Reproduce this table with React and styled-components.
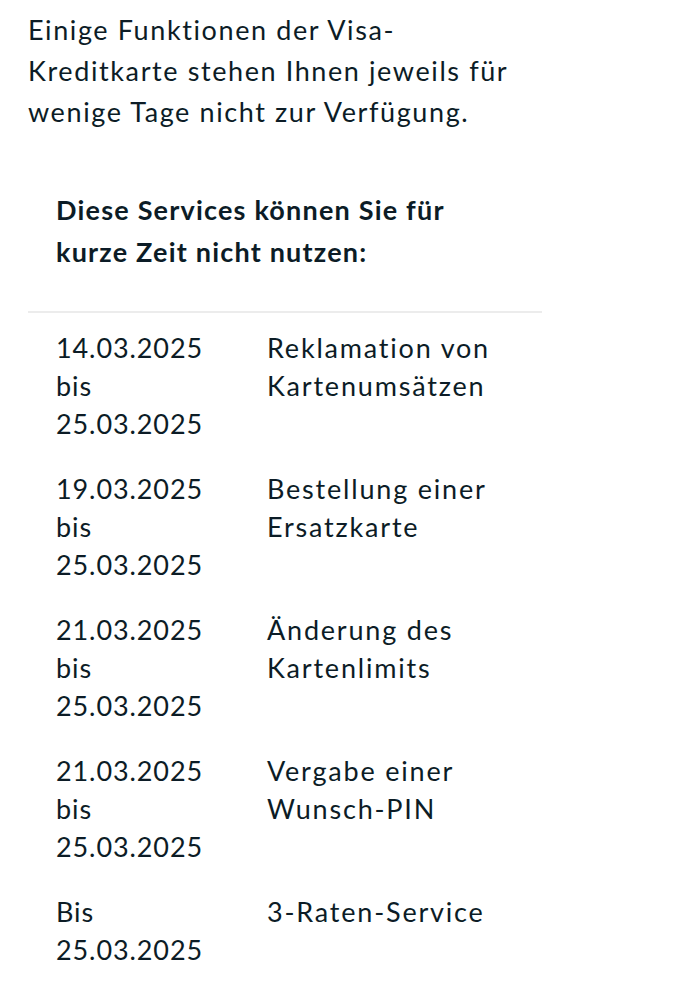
import React from "react";
import styled, { createGlobalStyle } from "styled-components";

const GlobalStyle = createGlobalStyle`
  html, body {
    margin: 0;
    padding: 0;
    background: #fff;
  }
  body {
    font-family: "Lato", "Noto Sans", sans-serif;
    color: #0c1c26;
    letter-spacing: 1.2px;
  }
`;

const Page = styled.main`
  width: 514px;
  padding: 9px 0 0 28px;
`;

const Intro = styled.p`
  margin: 0;
  font-size: 27px;
  line-height: 41px;
  letter-spacing: 1.6px;
`;

const Heading = styled.h2`
  margin: 57px 0 0;
  padding: 0 28px 38px;
  font-size: 27px;
  font-weight: 700;
  line-height: 42px;
  border-bottom: 2px solid #ececec;
`;

const ServiceTable = styled.div`
  display: grid;
  grid-template-columns: 211px 1fr;
  padding-top: 16px;
`;

const Cell = styled.div`
  padding: 0 0 27px 28px;
  font-size: 27px;
  line-height: 38px;
  letter-spacing: ${(p) => (p.$date ? "0.9px" : "1.8px")};
`;

const rows = [
  { from: "14.03.2025", to: "bis", until: "25.03.2025", service: ["Reklamation von", "Kartenumsätzen"] },
  { from: "19.03.2025", to: "bis", until: "25.03.2025", service: ["Bestellung einer", "Ersatzkarte"] },
  { from: "21.03.2025", to: "bis", until: "25.03.2025", service: ["Änderung des", "Kartenlimits"] },
  { from: "21.03.2025", to: "bis", until: "25.03.2025", service: ["Vergabe einer", "Wunsch-PIN"] },
  { from: "Bis", until: "25.03.2025", service: ["3-Raten-Service"] },
];

function App() {
  return (
    <>
      <GlobalStyle />
      <Page>
        <Intro>
          Einige Funktionen der Visa-
          <br />
          Kreditkarte stehen Ihnen jeweils für
          <br />
          wenige Tage nicht zur Verfügung.
        </Intro>
        <Heading>
          Diese Services können Sie für
          <br />
          kurze Zeit nicht nutzen:
        </Heading>
        <ServiceTable>
          {rows.map((row, i) => (
            <React.Fragment key={i}>
              <Cell $date>
                {row.from}
                <br />
                {row.to && (
                  <>
                    {row.to}
                    <br />
                  </>
                )}
                {row.until}
              </Cell>
              <Cell>
                {row.service.map((line, j) => (
                  <React.Fragment key={j}>
                    {j > 0 && <br />}
                    {line}
                  </React.Fragment>
                ))}
              </Cell>
            </React.Fragment>
          ))}
        </ServiceTable>
      </Page>
    </>
  );
}

export default App;
